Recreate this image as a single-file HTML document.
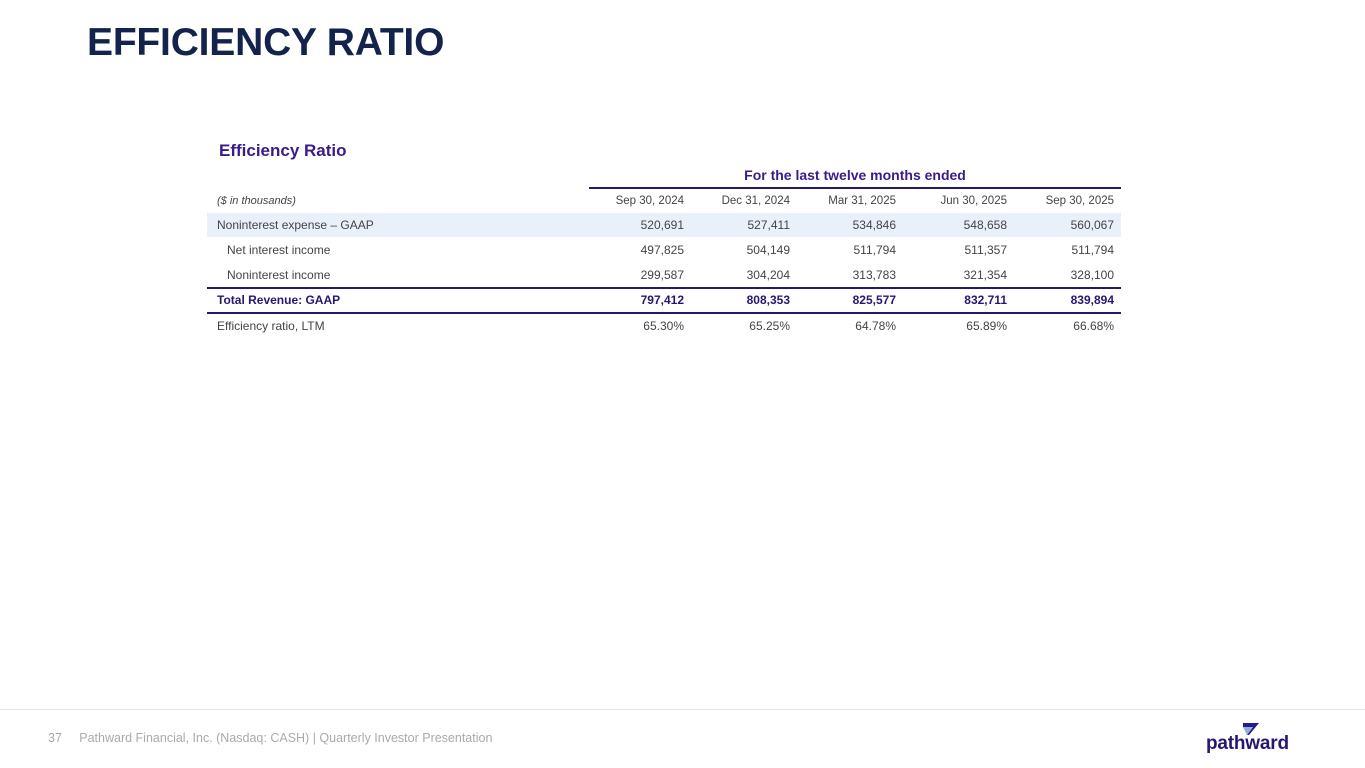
<!DOCTYPE html>
<html><head><meta charset="utf-8"><style>
body{margin:0;width:1365px;height:768px;background:#fff;font-family:"Liberation Sans",sans-serif;position:relative;overflow:hidden}
.t{position:absolute;left:87px;top:21px;font-size:39px;font-weight:bold;color:#14234b;letter-spacing:-0.2px}
.st{position:absolute;left:219px;top:141px;font-size:17px;font-weight:bold;color:#3a1a8c}
.hdr{position:absolute;left:589px;top:167px;width:532px;text-align:center;font-size:14px;font-weight:bold;color:#3a1a8c;border-bottom:2px solid #2a1570;height:20px}
.row{position:absolute;left:207px;width:914px;height:24px;font-size:12px;color:#444;line-height:24px}
.row span{position:absolute;top:0}
.row .l{left:10px}
.row .c{text-align:right;width:100px}
.b{font-weight:bold;color:#2a1570}
.foot{position:absolute;left:0;top:709px;width:1365px;border-top:1px solid #e6e6e6}
.ft{position:absolute;left:48px;top:731px;font-size:12.5px;color:#aaa}
</style></head><body>
<div class="t">EFFICIENCY RATIO</div>
<div class="st">Efficiency Ratio</div>
<div class="hdr">For the last twelve months ended</div>

<div class="row" style="top:189px;font-size:11.5px">
<span class="l" style="font-style:italic;font-size:11px">($ in thousands)</span>
<span class="c" style="left:377px">Sep 30, 2024</span><span class="c" style="left:483px">Dec 31, 2024</span><span class="c" style="left:589px">Mar 31, 2025</span><span class="c" style="left:700px">Jun 30, 2025</span><span class="c" style="left:807px">Sep 30, 2025</span></div>

<div class="row" style="top:213px;background:#e8f0f9">
<span class="l">Noninterest expense – GAAP</span>
<span class="c" style="left:377px">520,691</span><span class="c" style="left:483px">527,411</span><span class="c" style="left:589px">534,846</span><span class="c" style="left:700px">548,658</span><span class="c" style="left:807px">560,067</span></div>

<div class="row" style="top:238px">
<span class="l" style="left:20px">Net interest income</span>
<span class="c" style="left:377px">497,825</span><span class="c" style="left:483px">504,149</span><span class="c" style="left:589px">511,794</span><span class="c" style="left:700px">511,357</span><span class="c" style="left:807px">511,794</span></div>

<div class="row" style="top:263px;border-bottom:2px solid #2a1570">
<span class="l" style="left:20px">Noninterest income</span>
<span class="c" style="left:377px">299,587</span><span class="c" style="left:483px">304,204</span><span class="c" style="left:589px">313,783</span><span class="c" style="left:700px">321,354</span><span class="c" style="left:807px">328,100</span></div>

<div class="row b" style="top:288px;border-bottom:2px solid #2a1570">
<span class="l">Total Revenue: GAAP</span>
<span class="c" style="left:377px">797,412</span><span class="c" style="left:483px">808,353</span><span class="c" style="left:589px">825,577</span><span class="c" style="left:700px">832,711</span><span class="c" style="left:807px">839,894</span></div>

<div class="row" style="top:314px">
<span class="l">Efficiency ratio, LTM</span>
<span class="c" style="left:377px">65.30%</span><span class="c" style="left:483px">65.25%</span><span class="c" style="left:589px">64.78%</span><span class="c" style="left:700px">65.89%</span><span class="c" style="left:807px">66.68%</span></div>

<div class="foot"></div>
<div class="ft">37&nbsp;&nbsp;&nbsp;&nbsp;&nbsp;Pathward Financial, Inc. (Nasdaq: CASH) | Quarterly Investor Presentation</div>
<svg style="position:absolute;left:1240px;top:722px" width="20" height="14" viewBox="0 0 20 14"><polygon points="3,1 19,1 9,13 7,13 13,5 3,5" fill="#2a1a8a"/><polygon points="3,5 13,5 7,13" fill="#8ab0e0"/></svg>
<div style="position:absolute;left:1206px;top:733px;font-size:19px;font-weight:bold;color:#2a1570;letter-spacing:-0.2px">pathward</div>
</body></html>
